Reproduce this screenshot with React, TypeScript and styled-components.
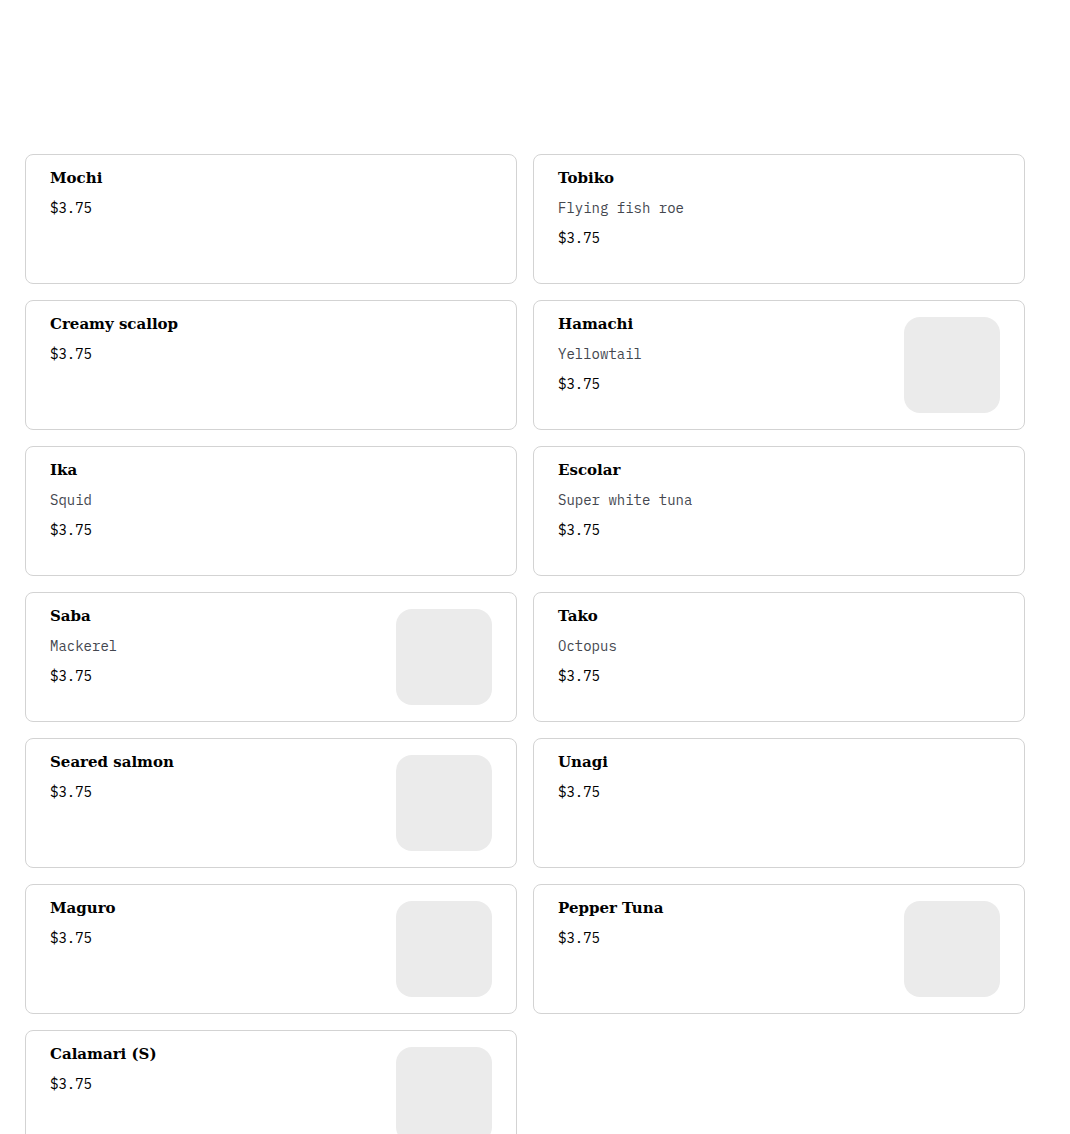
import React from "react";
import styled, { createGlobalStyle } from "styled-components";

const GlobalStyle = createGlobalStyle`
  *, *::before, *::after { box-sizing: border-box; }
  body {
    margin: 0;
    background: #fff;
    color: #0a0a0a;
    font-family: "IBM Plex Mono", "Liberation Mono", monospace;
  }
`;

const Page = styled.main`
  padding: 154px 45px 24px 25px;
`;

const Menu = styled.ul`
  display: grid;
  grid-template-columns: repeat(2, minmax(0, 1fr));
  gap: 16px;
  margin: 0;
  padding: 0;
  list-style: none;
`;

const Card = styled.li`
  display: flex;
  justify-content: space-between;
  align-items: flex-start;
  gap: 16px;
  min-height: 130px;
  padding: 16px 24px;
  border: 1px solid #d3d3d3;
  border-radius: 8px;
`;

const Details = styled.div`
  display: flex;
  flex-direction: column;
  gap: 8px;
  min-width: 0;
  margin-top: -4px;
`;

const Name = styled.h3`
  margin: 0;
  font-family: "DejaVu Serif", serif;
  font-size: 15px;
  font-weight: 900;
  line-height: 22px;
  color: #000;
`;

const Text = styled.p<{ $muted?: boolean }>`
  margin: 0;
  font-size: 14px;
  line-height: 22px;
  color: ${({ $muted }) => ($muted ? "#44474f" : "#000")};
`;

const Photo = styled.div`
  flex: none;
  width: 96px;
  height: 96px;
  border-radius: 16px;
  background: #ebebeb;
`;

interface Item {
  name: string;
  description?: string;
  photo?: boolean;
}

const items: Item[] = [
  { name: "Mochi" },
  { name: "Tobiko", description: "Flying fish roe" },
  { name: "Creamy scallop" },
  { name: "Hamachi", description: "Yellowtail", photo: true },
  { name: "Ika", description: "Squid" },
  { name: "Escolar", description: "Super white tuna" },
  { name: "Saba", description: "Mackerel", photo: true },
  { name: "Tako", description: "Octopus" },
  { name: "Seared salmon", photo: true },
  { name: "Unagi" },
  { name: "Maguro", photo: true },
  { name: "Pepper Tuna", photo: true },
  { name: "Calamari (S)", photo: true },
];

export default function App() {
  return (
    <>
      <GlobalStyle />
      <Page>
        <Menu>
          {items.map((item) => (
            <Card key={item.name}>
              <Details>
                <Name>{item.name}</Name>
                {item.description && <Text $muted>{item.description}</Text>}
                <Text>$3.75</Text>
              </Details>
              {item.photo && <Photo />}
            </Card>
          ))}
        </Menu>
      </Page>
    </>
  );
}
